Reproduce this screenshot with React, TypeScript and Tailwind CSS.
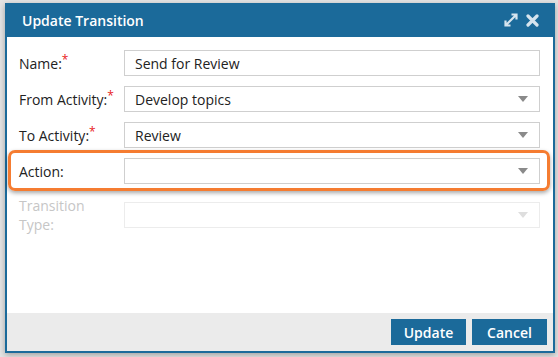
const font = { fontFamily: '"Open Sans", "Noto Sans", sans-serif' }

const Caret = ({ faded = false }: { faded?: boolean }) => (
  <svg width="10" height="6" viewBox="0 0 10 6" className="mr-[11px]">
    <path d="M0 0 L10 0 L5 6 Z" fill={faded ? '#dedede' : '#8a8a8a'} />
  </svg>
)

const Label = ({ text, required = false }: { text: string; required?: boolean }) => (
  <div className="w-[105px] shrink-0 text-[14px] text-[#222]">
    {text}
    {required && <span className="relative -top-[5px] text-[12px] text-[#e8201c]">*</span>}
  </div>
)

export default function App() {
  return (
    <div
      className="h-[357px] w-[558px] bg-[#e4e4e4] pl-[5px] pt-[3px]"
      style={font}
    >
      <div className="flex h-[350px] w-[550px] flex-col border-2 border-t-0 border-[#1b6a9a] shadow-[0_2px_6px_rgba(0,0,0,0.3)]">
        <div className="flex h-[34px] shrink-0 items-center justify-between bg-[#1b6a9a] pl-[15px] pr-[14px]">
          <span className="text-[14px] font-semibold text-white">Update Transition</span>
          <div className="flex items-center gap-[7px]">
            <svg width="16" height="16" viewBox="0 0 16 16">
              <path
                d="M3.5 12.5 L12.5 3.5 M8.5 2.5 H13.5 V7.5 M2.5 8.5 V13.5 H7.5"
                stroke="#d6e4ee"
                strokeWidth="2.2"
                fill="none"
              />
            </svg>
            <svg width="13" height="13" viewBox="0 0 13 13">
              <path
                d="M2 2 L11 11 M11 2 L2 11"
                stroke="#d6e4ee"
                strokeWidth="3.2"
                strokeLinecap="round"
              />
            </svg>
          </div>
        </div>

        <div className="flex flex-1 flex-col bg-white pl-[12px] pr-[13px] pt-[13px]">
          <div className="flex items-center">
            <Label text="Name:" required />
            <div className="flex h-[26px] flex-1 items-center border border-[#cfcfcf] pl-[10px] text-[14px] text-[#222]">
              Send for Review
            </div>
          </div>

          <div className="mt-[10px] flex items-center">
            <Label text="From Activity:" required />
            <div className="flex h-[26px] flex-1 items-center justify-between border border-[#cfcfcf] pl-[10px] text-[14px] text-[#222]">
              Develop topics
              <Caret />
            </div>
          </div>

          <div className="mt-[10px] flex items-center">
            <Label text="To Activity:" required />
            <div className="flex h-[26px] flex-1 items-center justify-between border border-[#cfcfcf] pl-[10px] text-[14px] text-[#222]">
              Review
              <Caret />
            </div>
          </div>

          <div className="relative mt-[10px] flex items-center">
            <Label text="Action:" />
            <div className="flex h-[26px] flex-1 items-center justify-end border border-[#cfcfcf]">
              <Caret />
            </div>
            <div className="pointer-events-none absolute -bottom-[7px] -left-[11px] -right-[10px] -top-[8px] rounded-[7px] border-[3px] border-[#f57c31] shadow-[0_2px_4px_rgba(0,0,0,0.35)]" />
          </div>

          <div className="mt-[12px] flex items-center">
            <div className="w-[105px] shrink-0 text-[14px] leading-[19px] text-[#c6c6c6]">
              Transition
              <br />
              Type:
            </div>
            <div className="flex h-[26px] flex-1 items-center justify-end border border-[#ececec]">
              <Caret faded />
            </div>
          </div>
        </div>

        <div className="flex h-[38px] shrink-0 items-center justify-end gap-[6px] bg-[#ebebeb] pr-[6px]">
          <button className="h-[26px] w-[75px] bg-[#1b6a9a] text-[14px] font-semibold text-white">
            Update
          </button>
          <button className="h-[26px] w-[75px] bg-[#1b6a9a] text-[14px] font-semibold text-white">
            Cancel
          </button>
        </div>
      </div>
    </div>
  )
}
